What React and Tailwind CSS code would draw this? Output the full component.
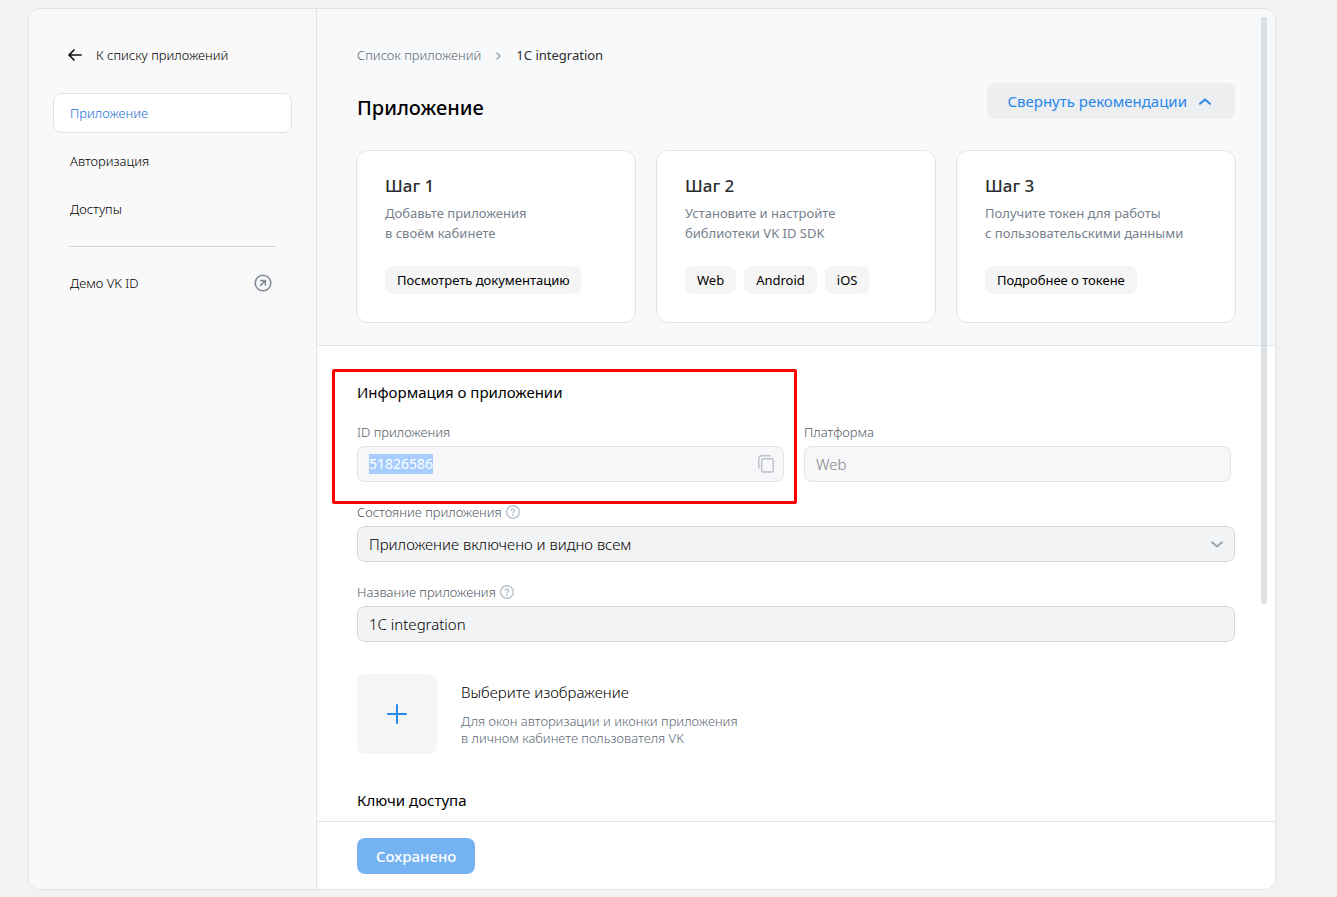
import { useState } from 'react'
import clsx from 'clsx'

const menu = ['Приложение', 'Авторизация', 'Доступы']

const steps = [
  {
    title: 'Шаг 1',
    lines: ['Добавьте приложения', 'в своём кабинете'],
    links: ['Посмотреть документацию'],
  },
  {
    title: 'Шаг 2',
    lines: ['Установите и настройте', 'библиотеки VK ID SDK'],
    links: ['Web', 'Android', 'iOS'],
  },
  {
    title: 'Шаг 3',
    lines: ['Получите токен для работы', 'с пользовательскими данными'],
    links: ['Подробнее о токене'],
  },
]

function ArrowLeftIcon() {
  return (
    <svg width="14" height="12" viewBox="0 0 14 12" fill="none" stroke="#111" strokeWidth="1.7" strokeLinecap="round" strokeLinejoin="round">
      <path d="M13 6H1.2M6 1 1 6l5 5" />
    </svg>
  )
}

function ExternalIcon() {
  return (
    <svg width="18" height="18" viewBox="0 0 18 18" fill="none" stroke="#818c99" strokeWidth="1.6" strokeLinecap="round" strokeLinejoin="round">
      <circle cx="9" cy="9" r="7.8" />
      <path d="M6.6 11.4l4.4-4.4M6.8 6.6h4.6v4.6" />
    </svg>
  )
}

function ChevronIcon({ className }) {
  return (
    <svg className={className} width="12" height="7" viewBox="0 0 12 7" fill="none" stroke="currentColor" strokeWidth="1.9" strokeLinecap="round" strokeLinejoin="round">
      <path d="M1 1.2l5 4.2 5-4.2" />
    </svg>
  )
}

function CrumbIcon() {
  return (
    <svg className="mx-[15px]" width="5" height="8" viewBox="0 0 5 8" fill="none" stroke="#99a2ad" strokeWidth="1.5" strokeLinecap="round" strokeLinejoin="round">
      <path d="M1 1l3 3-3 3" />
    </svg>
  )
}

function HelpIcon() {
  return (
    <svg width="14" height="14" viewBox="0 0 14 14" fill="none" stroke="#b8c1cc" strokeWidth="1.4" strokeLinecap="round" strokeLinejoin="round">
      <circle cx="7" cy="7" r="6.3" />
      <path d="M5.3 5.6c0-1 .7-1.7 1.7-1.7s1.7.6 1.7 1.5c0 1.1-1.6 1.2-1.6 2.4" />
      <circle cx="7.1" cy="9.9" r=".3" />
    </svg>
  )
}

function CopyIcon() {
  return (
    <svg width="16" height="18" viewBox="0 0 16 18" fill="none" stroke="#b8c1cc" strokeWidth="1.4" strokeLinecap="round">
      <rect x="3.7" y="3.7" width="11.6" height="13.3" rx="1.8" />
      <path d="M.8 13V4.3C.8 2 2 .8 4.3.8H12" />
    </svg>
  )
}

function PlusIcon() {
  return (
    <svg width="20" height="20" viewBox="0 0 20 20" stroke="#2688eb" strokeWidth="2" strokeLinecap="round">
      <path d="M10 1v18M1 10h18" />
    </svg>
  )
}

function Sidebar({ active, onSelect }) {
  return (
    <aside className="w-72 shrink-0 border-r border-[#e1e3e6] bg-[#f9f9f9] px-6 pt-[26px] font-light">
      <a href="#apps" className="flex h-10 items-center gap-3.5 pl-[15px] text-black">
        <ArrowLeftIcon />
        <span className="pt-0.5">К списку приложений</span>
      </a>
      <nav className="mt-[18px] flex flex-col gap-2">
        {menu.map((item) => (
          <button
            key={item}
            type="button"
            onClick={() => onSelect(item)}
            className={clsx(
              'flex h-10 items-center rounded-lg border px-4 pt-0.5 text-left',
              item === active
                ? 'border-[#e1e3e6] bg-white text-[#1a6fd6]'
                : 'border-transparent text-black'
            )}
          >
            {item}
          </button>
        ))}
      </nav>
      <hr className="mx-4 mt-[17px] mb-4 border-[#d3d5d8]" />
      <a href="#demo" className="flex h-10 items-center justify-between pr-5 pl-[17px] text-black">
        <span className="pt-0.5">Демо VK ID</span>
        <ExternalIcon />
      </a>
    </aside>
  )
}

function StepCard({ title, lines, links }) {
  return (
    <article className="flex-1 rounded-xl border border-[#e1e3e6] bg-white px-7 pt-6 pb-7">
      <h2 className="text-[17px] leading-[22px] font-medium text-[#2c2d2e]">{title}</h2>
      <p className="mt-1.5 leading-5 text-[#76818d]">
        {lines[0]}
        <br />
        {lines[1]}
      </p>
      <div className="mt-[23px] flex gap-2">
        {links.map((link) => (
          <button key={link} type="button" className="h-7 rounded-lg bg-[#f5f5f5] px-3 pt-0.5 whitespace-nowrap text-black">
            {link}
          </button>
        ))}
      </div>
    </article>
  )
}

function FieldLabel({ htmlFor, help, children }) {
  return (
    <div className="flex h-5 items-center gap-1 font-light text-[#4f5a66]">
      <label htmlFor={htmlFor} className="pt-0.5">{children}</label>
      {help && <HelpIcon />}
    </div>
  )
}

export default function App() {
  const [active, setActive] = useState('Приложение')
  const [open, setOpen] = useState(true)
  const [name, setName] = useState('1C integration')

  return (
    <div className="flex h-screen bg-[#f0f2f4] pt-2 pr-[61px] pb-[7px] pl-7 font-['Noto_Sans','Open_Sans',sans-serif] text-[13px]">
      <div className="flex min-w-0 flex-1 overflow-hidden rounded-xl border border-[#e1e3e6] bg-white">
        <Sidebar active={active} onSelect={setActive} />

        <main className="relative flex min-w-0 flex-1 flex-col">
          <div className="min-h-0 flex-1 overflow-hidden">
            <header className="border-b border-[#e1e3e6] bg-[#f8f9fb] px-[39px] pt-9 pb-[22px]">
              <nav className="flex h-5 items-center px-px pt-0.5">
                <a href="#apps" className="font-light text-[#5d6875]">Список приложений</a>
                <CrumbIcon />
                <span className="text-[#2c2d2e]">1C integration</span>
              </nav>
              <div className="mt-[18px] flex items-start justify-between px-px">
                <h1 className="mt-[11px] text-xl leading-7 font-medium text-black">{active}</h1>
                <button
                  type="button"
                  onClick={() => setOpen(!open)}
                  className="flex h-9 items-center gap-3 rounded-lg bg-[#edeef0] pr-6 pl-5 text-[15px] text-[#2688eb]"
                >
                  Свернуть рекомендации
                  <ChevronIcon className={clsx(open && 'rotate-180')} />
                </button>
              </div>
              {open && (
                <div className="mt-7 flex gap-5">
                  {steps.map((step) => (
                    <StepCard key={step.title} {...step} />
                  ))}
                </div>
              )}
            </header>

            <form className="px-10 pt-9">
              <h2 className="text-[15px] leading-5 text-black">Информация о приложении</h2>
              <div className="mt-5 flex gap-5 pr-1">
                <div className="relative flex-1">
                  <FieldLabel htmlFor="app-id">ID приложения</FieldLabel>
                  <div className="mt-1 flex h-9 items-center justify-between rounded-lg border border-[#e1e3e6] bg-[#f7f7fa] pr-[9px] pl-[11px]">
                    <input
                      id="app-id"
                      readOnly
                      value="51826586"
                      className="field-sizing-content h-5 bg-[#a6cdfd] text-sm text-white outline-none"
                    />
                    <button type="button" aria-label="Скопировать">
                      <CopyIcon />
                    </button>
                  </div>
                  <div className="pointer-events-none absolute -top-[53px] -right-[13px] -bottom-[22px] -left-[25px] rounded-xs border-3 border-[#fe0000]" />
                </div>
                <div className="flex-1">
                  <FieldLabel htmlFor="platform">Платформа</FieldLabel>
                  <input
                    id="platform"
                    readOnly
                    value="Web"
                    className="mt-1 block h-9 w-full rounded-lg border border-[#e1e3e6] bg-[#f7f7fa] px-[11px] text-[15px] font-light text-[#808080] outline-none"
                  />
                </div>
              </div>

              <div className="mt-5">
                <FieldLabel htmlFor="state" help>Состояние приложения</FieldLabel>
                <div className="relative mt-1">
                  <select
                    id="state"
                    className="block h-9 w-full appearance-none rounded-lg border border-[#d3d5d8] bg-[#f2f3f5] px-[11px] text-[15px] font-light text-black outline-none"
                  >
                    <option>Приложение включено и видно всем</option>
                    <option>Приложение отключено</option>
                  </select>
                  <ChevronIcon className="pointer-events-none absolute top-[15px] right-3 text-[#99a2ad]" />
                </div>
              </div>

              <div className="mt-5">
                <FieldLabel htmlFor="name" help>Название приложения</FieldLabel>
                <input
                  id="name"
                  value={name}
                  onChange={(e) => setName(e.target.value)}
                  className="mt-1 block h-9 w-full rounded-lg border border-[#d3d5d8] bg-[#f2f3f5] px-[11px] text-[15px] font-light text-black outline-none"
                />
              </div>

              <div className="mt-8 flex gap-6">
                <button type="button" aria-label="Выберите изображение" className="flex size-20 items-center justify-center rounded-lg bg-[#f5f5f5]">
                  <PlusIcon />
                </button>
                <div className="pt-2 font-light">
                  <p className="text-[15px] leading-5 text-black">Выберите изображение</p>
                  <p className="mt-[11px] leading-[17px] text-[#5d6875]">
                    Для окон авторизации и иконки приложения
                    <br />
                    в личном кабинете пользователя VK
                  </p>
                </div>
              </div>

              <h2 className="mt-9 text-[15px] leading-5 text-black">Ключи доступа</h2>
            </form>
          </div>

          <footer className="border-t border-[#e1e3e6] bg-white px-10 pt-4 pb-[15px]">
            <button type="button" disabled className="h-9 rounded-lg bg-[#74b2f2] px-[19px] text-[15px] font-medium text-white">
              Сохранено
            </button>
          </footer>

          <div className="absolute top-2 right-2 h-2/3 w-1.5 rounded-full bg-[#c5ced6]/60" />
        </main>
      </div>
    </div>
  )
}
